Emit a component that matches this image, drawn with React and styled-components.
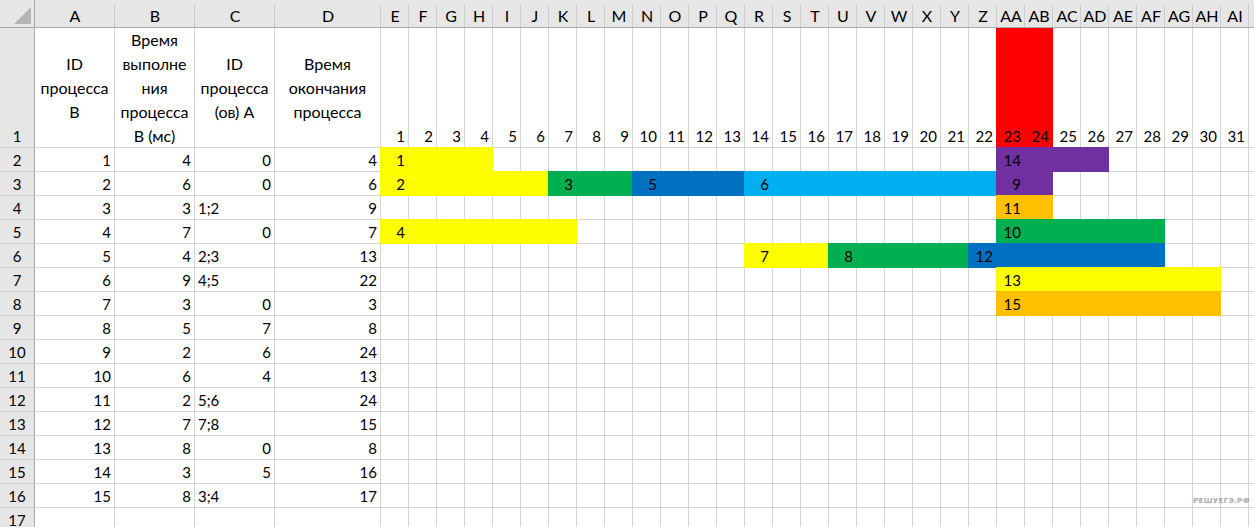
import React from 'react'
import styled, { createGlobalStyle, css } from 'styled-components'

const GlobalStyle = createGlobalStyle`
  html, body {
    margin: 0;
    padding: 0;
    background: #fff;
    overflow: hidden;
  }
`

const C = {
  yellow: '#ffff00',
  green: '#00b050',
  blue: '#0070c0',
  cyan: '#00b0f0',
  purple: '#7030a0',
  orange: '#ffc000',
  red: '#ff0000',
}

const letters = ['E','F','G','H','I','J','K','L','M','N','O','P','Q','R','S','T','U','V','W','X','Y','Z','AA','AB','AC','AD','AE','AF','AG','AH','AI']

const heads = [
  ['ID', 'процесса', 'В'],
  ['Время', 'выполне', 'ния', 'процесса', 'В (мс)'],
  ['ID', 'процесса', '(ов) А'],
  ['Время', 'окончания', 'процесса'],
]

const data = [
  [1, 4, 0, 4],
  [2, 6, 0, 6],
  [3, 3, '1;2', 9],
  [4, 7, 0, 7],
  [5, 4, '2;3', 13],
  [6, 9, '4;5', 22],
  [7, 3, 0, 3],
  [8, 5, 7, 8],
  [9, 2, 6, 24],
  [10, 6, 4, 13],
  [11, 2, '5;6', 24],
  [12, 7, '7;8', 15],
  [13, 8, 0, 8],
  [14, 3, 5, 16],
  [15, 8, '3;4', 17],
]

// bars per sheet row: [from, to, colour, label]
const bars = {
  2: [[1, 4, C.yellow, '1'], [23, 26, C.purple, '14']],
  3: [[1, 6, C.yellow, '2'], [7, 9, C.green, '3'], [10, 13, C.blue, '5'], [14, 22, C.cyan, '6'], [23, 24, C.purple, '9']],
  4: [[23, 24, C.orange, '11']],
  5: [[1, 7, C.yellow, '4'], [23, 28, C.green, '10']],
  6: [[14, 16, C.yellow, '7'], [17, 21, C.green, '8'], [22, 28, C.blue, '12']],
  7: [[23, 30, C.yellow, '13']],
  8: [[23, 30, C.orange, '15']],
}

function App() {
  const rows = []
  for (let r = 2; r <= 17; r++) {
    const d = data[r - 2]
    const cells = [<RowHead key="h">{r}</RowHead>]
    for (let i = 0; i < 4; i++) {
      const v = d ? d[i] : ''
      cells.push(
        <Cell key={'d' + i} $left={typeof v === 'string'}>{v}</Cell>
      )
    }
    for (let c = 1; c <= 31; c++) {
      const bar = (bars[r] || []).find(b => c >= b[0] && c <= b[1])
      cells.push(
        <Cell key={'t' + c} $fill={bar && bar[2]}>
          {bar && bar[0] === c ? bar[3] : ''}
        </Cell>
      )
    }
    cells.push(<Cell key="end" />)
    rows.push(cells)
  }

  return (
    <>
      <GlobalStyle />
      <Sheet>
        <Corner>
          <svg width="17" height="17" viewBox="0 0 17 17">
            <polygon points="17,0 17,17 0,17" fill="#b4b4b4" />
          </svg>
        </Corner>
        {['A', 'B', 'C', 'D'].concat(letters).map(l => (
          <ColHead key={l}>{l}</ColHead>
        ))}
        <ColHead $last />

        <RowHead>1</RowHead>
        {heads.map((lines, i) => (
          <TitleCell key={i}>
            {lines.map(t => <span key={t}>{t}</span>)}
          </TitleCell>
        ))}
        {letters.map((l, i) => (
          <Cell key={l} $fill={i === 22 || i === 23 ? C.red : undefined} $noTop>
            {i + 1}
          </Cell>
        ))}
        <Cell />

        {rows}

        <Mark>РЕШУЕГЭ.РФ</Mark>
      </Sheet>
    </>
  )
}

export default App

const Sheet = styled.div`
  position: relative;
  display: grid;
  grid-template-columns: 35px 80px 80px 80px 106px repeat(31, 28px) 1fr;
  grid-template-rows: 28px 120px;
  grid-auto-rows: 24px;
  width: 1254px;
  height: 527px;
  overflow: hidden;
  font-family: Lato, "Open Sans", sans-serif;
  font-size: 15px;
  color: #000;
`

const Corner = styled.div`
  background: #e6e6e6;
  border-right: 1px solid #ababab;
  border-bottom: 1px solid #ababab;
  box-sizing: border-box;
  display: flex;
  align-items: flex-end;
  justify-content: flex-end;
  padding: 0 3px 3px 0;
`

const ColHead = styled.div`
  background-color: #e6e6e6;
  background-image: linear-gradient(to left, ${p => (p.$last ? 'transparent' : '#cdcdcd')} 1px, transparent 1px);
  background-size: 100% 23px;
  background-position: bottom;
  background-repeat: no-repeat;
  border-bottom: 1px solid #ababab;
  box-sizing: border-box;
  display: flex;
  align-items: center;
  justify-content: center;
  padding-top: 4px;
  font-size: 16px;
  line-height: 19px;
  white-space: nowrap;
`

const RowHead = styled.div`
  background: #e6e6e6;
  border-right: 1px solid #ababab;
  border-bottom: 1px solid #cdcdcd;
  box-sizing: border-box;
  display: flex;
  align-items: flex-end;
  justify-content: center;
  padding-bottom: 2px;
  line-height: 18px;
`

const Cell = styled.div`
  border-right: 1px solid #d4d4d4;
  border-bottom: 1px solid #d4d4d4;
  box-sizing: border-box;
  display: flex;
  align-items: flex-end;
  justify-content: ${p => (p.$left ? 'flex-start' : 'flex-end')};
  padding: 0 3px 2px;
  line-height: 18px;
  white-space: nowrap;
  ${p => p.$fill && css`
    background: ${p.$fill};
    border-color: ${p.$fill};
    box-shadow: ${p.$noTop
      ? `-1px 0 0 0 ${p.$fill}`
      : `-1px 0 0 0 ${p.$fill}, 0 -1px 0 0 ${p.$fill}, -1px -1px 0 0 ${p.$fill}`};
  `}
`

const TitleCell = styled.div`
  border-right: 1px solid #d4d4d4;
  border-bottom: 1px solid #d4d4d4;
  box-sizing: border-box;
  display: flex;
  flex-direction: column;
  align-items: center;
  justify-content: center;
  font-size: 16px;
  line-height: 24px;
  text-align: center;
  white-space: nowrap;
`

const Mark = styled.div`
  position: absolute;
  right: 4px;
  bottom: 22px;
  font-family: "DejaVu Sans", sans-serif;
  font-weight: bold;
  font-size: 7px;
  letter-spacing: 0.4px;
  color: #a9a9a9;
`
